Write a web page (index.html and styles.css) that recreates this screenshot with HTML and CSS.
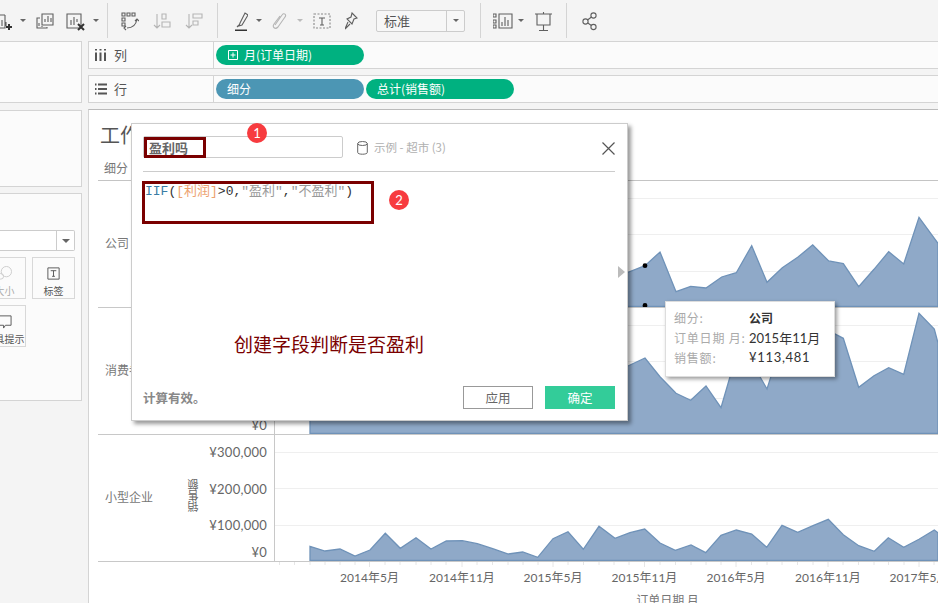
FILE: index.html
```html
<!DOCTYPE html>
<html lang="zh-CN">
<head>
<meta charset="utf-8">
<title>计算字段</title>
<link rel="stylesheet" href="styles.css">
</head>
<body>
<div class="app">
  <header class="toolbar">
    <svg class="ic w12" viewBox="0 0 12 20"><path d="M0 4h5M5 4v13H0M2 15V9M6 15V11" fill="none"/><path class="heavy" d="M6 16h6M9 13v6"/></svg>
    <i class="caret g8"></i>
    <svg class="ic w18 g10" viewBox="0 0 18 20"><path d="M6 3h11v11H6zM9 11V8M12 11V5M15 11V7M4 7H1v10h10v-1M3 15v-3M6 16v-1"/></svg>
    <svg class="ic w20 g12" viewBox="0 0 20 20"><path d="M1 3h14v14H1zM5 14V9M8 14V6M11 11V8"/><path class="heavy" d="M12 13l6 6M18 13l-6 6"/></svg>
    <i class="caret g7"></i>
    <i class="sep g8"></i>
    <svg class="ic w18 g13" viewBox="0 0 18 20"><path d="M1 2h3v3H1zM6 2h3v3H6zM11 2h3v3h-3zM1 7h3v3H1zM1 12h3v3H1zM6 17c5 0 9-3 10-9M14 10l2-2 2 2M5 15l-2 2 2 2"/></svg>
    <svg class="ic w18 g14 dim" viewBox="0 0 18 20"><path d="M4 3v14M1 14l3 3 3-3M9 3h4v5H9zM9 11h8v5H9z"/></svg>
    <svg class="ic w18 g14 dim" viewBox="0 0 18 20"><path d="M4 3v14M1 14l3 3 3-3M8 3h9v4H8zM8 10h5v4H8z"/></svg>
    <i class="sep g14"></i>
    <svg class="ic w13 g17" viewBox="0 0 13 20"><path d="M5 12l5-10 3 2-6 10-3 1zM4 14l-2 2"/><path class="heavy" d="M0 19.500h12"/></svg>
    <i class="caret g8"></i>
    <svg class="ic w15 g10 dim" viewBox="0 0 15 20"><path d="M3 14l7-10c2-3 5 0 3 2l-7 10c-3 3-6 0-4-3l6-8"/></svg>
    <i class="caret g10 dim-caret"></i>
    <svg class="ic w18 g10" viewBox="0 0 18 20"><path class="dash" d="M1 3h16v14H1z"/><path d="M6 7h6M9 7v7M7 14h4"/></svg>
    <svg class="ic w13 g14" viewBox="0 0 13 20"><path d="M7 2l5 5-3 1-2 5-5-5 4-2zM3 11l-3 7 5-5"/></svg>
    <div class="combo g18"><span class="combo-text">标准</span><span class="combo-btn"><i class="caret"></i></span></div>
    <i class="sep g15"></i>
    <svg class="ic w20 g12" viewBox="0 0 20 20"><path d="M0 3h3v3H0zM0 9h3v3H0zM0 14h3v3H0zM6 3h13v14H6zM9 15v-4M12 15V6M15 15V9"/></svg>
    <i class="caret g5"></i>
    <svg class="ic w17 g11" viewBox="0 0 17 20"><path d="M0 3h17M2 3v11h13V3M8.500 14v5M4 19.500h9M8.500 1v2"/></svg>
    <i class="sep g14"></i>
    <svg class="ic w15 g15" viewBox="0 0 15 20"><circle cx="11.500" cy="4.500" r="2.600"/><circle cx="3.500" cy="10.500" r="2.600"/><circle cx="11.500" cy="16" r="2.600"/><path d="M9.500 6l-4 3M5.800 12l3.600 2.500"/></svg>
  </header>

  <div class="workspace">
    <aside class="side">
      <div class="panel panel-a"></div>
      <div class="panel panel-b"></div>
      <div class="panel panel-c">
        <div class="mark-select"><span class="mark-btn"><i class="caret"></i></span></div>
        <div class="mark-grid">
          <div class="mark"><svg class="mark-ic" viewBox="0 0 16 16"><circle cx="10" cy="6" r="5.500"/><circle cx="4" cy="11" r="3"/></svg><span class="faint">大小</span></div>
          <div class="mark"><svg class="mark-ic" viewBox="0 0 16 16"><path d="M2 2h12v12H2zM5 5h6M8 5v6M6.500 11h3"/></svg><span>标签</span></div>
          <div class="mark"><svg class="mark-ic" viewBox="0 0 16 16"><path d="M1 2h14v10H9l-2 3v-3H1z"/></svg><span>工具提示</span></div>
        </div>
      </div>
    </aside>

    <main class="main">
      <div class="shelf">
        <div class="shelf-label"><svg class="shelf-ic" viewBox="0 0 12 12"><path d="M1 0v1.500M1 3.500V12M5.500 0v1.500M5.500 3.500V12M10 0v1.500M10 3.500V12"/></svg>列</div>
        <div class="shelf-body">
          <span class="pill green pill-date"><svg class="plus" viewBox="0 0 10 10"><path d="M.5.500h9v9h-9zM5 2.500v5M2.500 5h5"/></svg>月(订单日期)</span>
        </div>
      </div>
      <div class="shelf">
        <div class="shelf-label"><svg class="shelf-ic" viewBox="0 0 12 12"><path d="M0 1.500h1.500M3 1.500h9M0 6h1.500M3 6h9M0 10.500h1.500M3 10.500h9"/></svg>行</div>
        <div class="shelf-body">
          <span class="pill blue">细分</span>
          <span class="pill green">总计(销售额)</span>
        </div>
      </div>

      <section class="card">
        <h1 class="title">工作表 1</h1>
        <div class="col-head">细分</div>

        <div class="row">
          <div class="row-head">
            <span class="row-label">公司</span>
            <div class="ticks"><span class="tick">¥300,000</span><span class="tick">¥200,000</span><span class="tick">¥100,000</span><span class="tick tick-zero">¥0</span></div>
          </div>
          <svg class="plot" viewBox="275 181 663 126">
            <path class="grid" d="M275 198.500H938M275 234.500H938M275 271.500H938"/>
            <path class="area" d="M310 306.500V280L340 270 400 285 460 262 520 278 580 268 628 272.300 645 265.700 660 252 676 291.700 690.700 286.300 706 288 721.700 277 736.300 272.700 751.700 245.700 767 282.300 782.300 267.700 797.700 257.300 812.700 245 828.700 261 843.300 263.700 858.700 286.700 874 269.300 888.700 251.700 903.700 264 919 217.300 938 243.300V306.500Z"/>
            <circle class="dot" cx="645" cy="265.700" r="2.400"/>
            <circle class="dot" cx="645" cy="305.500" r="2.400"/>
          </svg>
        </div>

        <div class="row">
          <div class="row-head">
            <span class="row-label">消费者</span>
            <div class="ticks"><span class="tick">¥300,000</span><span class="tick">¥200,000</span><span class="tick">¥100,000</span><span class="tick tick-zero">¥0</span></div>
          </div>
          <svg class="plot" viewBox="275 308 663 126">
            <path class="grid" d="M275 325.500H938M275 361.500H938M275 398.500H938"/>
            <path class="area" d="M310 433.500V380L400 395 500 370 600 385 628 366 645 358 660 376.700 676 393.300 690.700 400.300 706 386 721 407.700 730 376.700 745 350 760 376.700 767 389 773 370 790 345 815 335 833 333 843.300 338.300 858.700 387.300 874 375.700 888.700 367.700 903.700 374.300 919 313.300 934.300 329 938 343V433.500Z"/>
          </svg>
        </div>

        <div class="row">
          <div class="row-head">
            <span class="row-label">小型企业</span>
            <span class="axis-title">销售额</span>
            <div class="ticks"><span class="tick">¥300,000</span><span class="tick">¥200,000</span><span class="tick">¥100,000</span><span class="tick tick-zero">¥0</span></div>
          </div>
          <svg class="plot" viewBox="275 435 663 126">
            <path class="grid" d="M275 452.500H938M275 488.500H938M275 525.500H938"/>
            <path class="area" d="M310 560.500V546.300L325 551 340 549 355 556 370 550 385.300 533.300 400.300 548.300 416 537.700 431 549 446.300 541 462.300 540.700 477.300 543.700 492.700 548.700 508.300 554 522.700 552 537.700 557.300 553 538.700 568 531.700 583.300 549.300 599 526.300 615 538.300 630 532.700 644.700 529 660 543 675.300 550.300 691 545 705.700 552.700 721 535.300 736.300 530 751.700 534 766.700 547.300 782 525.300 797.700 532.300 813 525.700 828.300 519.300 843.300 534.700 858.700 545.700 874.300 551.300 888.300 537.700 903.700 547.300 919 539.300 934.300 530 938 532.700V560.500Z"/>
          </svg>
        </div>

        <svg class="x-axis" viewBox="98 562 840 41">
          <path class="x-ticks" d="M279.500 562v3M294.500 562v3M310 562v3M325 562v3M340 562v3M355 562v3M369.500 562v5M385 562v3M400 562v3M416 562v3M431 562v3M446 562v3M462 562v5M477 562v3M492.500 562v3M508 562v3M523 562v3M538 562v3M553 562v5M568 562v3M583.500 562v3M599 562v3M614 562v3M629 562v3M644.500 562v5M660 562v3M675.500 562v3M691 562v3M706 562v3M721 562v3M736 562v5M751.500 562v3M767 562v3M782 562v3M797.500 562v3M813 562v3M828 562v5M843 562v3M858.500 562v3M874 562v3M888.500 562v3M904 562v3M919 562v5M934 562v3"/>
          <text class="x-label" x="369.500" y="582">2014年5月</text>
          <text class="x-label" x="462" y="582">2014年11月</text>
          <text class="x-label" x="553" y="582">2015年5月</text>
          <text class="x-label" x="644.500" y="582">2015年11月</text>
          <text class="x-label" x="736" y="582">2016年5月</text>
          <text class="x-label" x="828" y="582">2016年11月</text>
          <text class="x-label" x="919" y="582">2017年5月</text>
          <text class="x-title" x="667.500" y="605">订单日期 月</text>
        </svg>
      </section>
    </main>
  </div>

  <div class="tooltip">
    <span class="tip-key">细分:</span><strong class="tip-val">公司</strong>
    <span class="tip-key">订单日期 月:</span><span class="tip-val">2015年11月</span>
    <span class="tip-key">销售额:</span><span class="tip-val tip-money">¥113,481</span>
  </div>

  <div class="dialog">
    <div class="dlg-head">
      <div class="name-field">盈利吗</div>
      <svg class="db-ic" viewBox="0 0 11 14"><ellipse cx="5.500" cy="2.500" rx="4.800" ry="2"/><path d="M.7 2.500v9c0 2.300 9.600 2.300 9.600 0v-9"/></svg>
      <span class="source">示例 - 超市 (3)</span>
      <svg class="close" viewBox="0 0 13 13"><path d="M.5.500l12 12M12.500.500l-12 12"/></svg>
    </div>
    <div class="editor"><span class="c-fn">IIF</span>(<span class="c-field">[利润]</span>&gt;0,<span class="c-str">"盈利"</span>,<span class="c-str">"不盈利"</span>)</div>
    <div class="dlg-foot">
      <span class="status">计算有效。</span>
      <button class="btn btn-apply">应用</button>
      <button class="btn btn-ok">确定</button>
    </div>
    <i class="expander"></i>
    <div class="mark-box name-box"></div>
    <div class="mark-box code-box"></div>
    <span class="badge badge-1">1</span>
    <span class="badge badge-2">2</span>
    <p class="note">创建字段判断是否盈利</p>
  </div>
</div>
</body>
</html>
```
FILE: styles.css
```css
* { box-sizing: border-box; }
html, body { margin: 0; padding: 0; }
body { font-family: "Noto Sans CJK SC", "Liberation Sans", sans-serif; color: #555; }
i { display: block; font-style: normal; }

.app { position: relative; width: 938px; height: 603px; overflow: hidden; background: #f4f4f4; display: flex; flex-direction: column; }

/* toolbar */
.toolbar { height: 41px; flex: none; display: flex; align-items: center; }
.ic { flex: none; height: 20px; fill: none; stroke: #5f5f5f; stroke-width: 1.1; }
.ic.dim { stroke: #b5b5b5; }
.heavy { stroke: #333; stroke-width: 2; }
.dash { stroke-dasharray: 2 1.500; stroke: #888; }
.w12 { width: 12px; } .w13 { width: 13px; } .w15 { width: 15px; } .w17 { width: 17px; } .w18 { width: 18px; } .w20 { width: 20px; }
.g5 { margin-left: 5px; } .g7 { margin-left: 7px; } .g8 { margin-left: 8px; } .g10 { margin-left: 10px; } .g11 { margin-left: 11px; }
.g12 { margin-left: 12px; } .g13 { margin-left: 13px; } .g14 { margin-left: 14px; } .g15 { margin-left: 15px; } .g17 { margin-left: 17px; } .g18 { margin-left: 18px; }
.caret { flex: none; width: 0; height: 0; border-left: 3px solid transparent; border-right: 3px solid transparent; border-top: 3px solid #666; }
.dim-caret { border-top-color: #bbb; }
.sep { flex: none; width: 1px; height: 35px; background: #d4d4d4; }
.combo { flex: none; width: 89px; height: 22px; background: #f7f7f7; border: 1px solid #ccc; border-radius: 2px; display: flex; align-items: center; font-size: 13px; }
.combo-text { flex: 1; padding-left: 7px; color: #555; line-height: 20px; }
.combo-btn { width: 18px; height: 20px; border-left: 1px solid #ccc; display: flex; align-items: center; justify-content: center; }

/* workspace */
.workspace { flex: 1; display: flex; gap: 6px; min-height: 0; }
.side { width: 82px; flex: none; display: flex; flex-direction: column; gap: 7px; }
.panel { background: #fbfbfb; border: 1px solid #d4d4d4; border-left: 0; flex: none; }
.panel-a { height: 62px; }
.panel-b { height: 77px; }
.panel-c { height: 208px; margin-top: -1px; padding: 36px 6px 0 0; }
.mark-select { height: 21px; background: #fff; border: 1px solid #ccc; border-left: 0; border-radius: 0 2px 2px 0; display: flex; justify-content: flex-end; }
.mark-btn { width: 18px; border-left: 1px solid #ccc; display: flex; align-items: center; justify-content: center; }
.mark-btn .caret { border-left-width: 4px; border-right-width: 4px; border-top-width: 4px; }
.mark-grid { margin-top: 6px; width: 75px; margin-left: auto; display: grid; grid-template-columns: 43px 43px; column-gap: 6px; row-gap: 6px; justify-content: end; }
.mark { height: 42px; width: 43px; border: 1px solid #d8d8d8; background: #fbfbfb; display: flex; flex-direction: column; align-items: center; font-size: 10px; line-height: 14px; white-space: nowrap; color: #555; overflow: hidden; }
.mark-ic { width: 15px; height: 15px; margin: 8px 0 3px; fill: none; stroke: #555; flex: none; }
.mark:nth-child(1) .mark-ic { stroke: #ccc; }
.faint { color: #aaa; }

/* shelves */
.main { flex: 1; min-width: 0; display: flex; flex-direction: column; }
.shelf { height: 28px; flex: none; margin-bottom: 6px; background: #fbfbfb; border-top: 1px solid #d4d4d4; border-bottom: 1px solid #d4d4d4; border-left: 1px solid #d4d4d4; display: flex; }
.shelf-label { width: 125px; flex: none; border-right: 1px solid #d4d4d4; display: flex; align-items: center; padding: 0 0 1px 6px; gap: 7px; font-size: 13px; color: #555; }
.shelf-ic { width: 12px; height: 12px; fill: none; stroke: #555; stroke-width: 2; }
.shelf-body { display: flex; gap: 2px; padding-left: 2px; align-items: center; }
.pill { width: 148px; height: 20px; border-radius: 10px; color: #fff; font-size: 12px; line-height: 20px; padding-left: 11px; display: flex; align-items: center; }
.green { background: #00b180; }
.blue { background: #4c96b4; }
.pill-date { padding-left: 12px; gap: 6px; }
.plus { width: 10px; height: 10px; fill: none; stroke: #fff; }

/* card */
.card { flex: 1; min-height: 0; background: #fff; border-top: 1px solid #bbb; border-left: 1px solid #d4d4d4; padding-left: 9px; display: flex; flex-direction: column; overflow: hidden; }
.title { margin: 0; height: 47px; padding: 11px 0 0 2px; font-size: 20px; line-height: 28px; font-weight: 400; color: #555; flex: none; }
.col-head { height: 24px; flex: none; border-bottom: 1px solid #c4c4c4; font-size: 12px; line-height: 22px; padding-left: 6px; color: #777; }
.row { height: 127px; flex: none; display: flex; border-bottom: 1px solid #c8c8c8; }
.row-head { position: relative; width: 176px; flex: none; display: flex; justify-content: flex-end; padding-right: 7px; }
.row-label { position: absolute; left: 7px; top: 54px; font-size: 12px; line-height: 16px; color: #777; }
.axis-title { position: absolute; left: 89px; top: 44px; writing-mode: vertical-rl; transform: rotate(180deg); font-size: 11px; line-height: 13px; color: #666; }
.ticks { display: flex; flex-direction: column; align-items: flex-end; padding-top: 10px; font-family: Lato, "Noto Sans CJK SC", sans-serif; font-size: 13px; letter-spacing: .25px; color: #666; }
.tick { flex: none; height: 36.700px; line-height: 14px; }
.tick-zero { margin-top: -10px; }
.plot { width: 663px; height: 126px; flex: none; border-left: 1px solid #c8c8c8; display: block; box-sizing: content-box; }
.grid { stroke: #efefef; fill: none; }
.area { fill: #8fa9c8; stroke: #6f92b8; stroke-width: 1.300; }
.dot { fill: #000; }
.x-axis { width: 840px; height: 41px; flex: none; display: block; }
.x-ticks { stroke: #e6e6e6; fill: none; }
.x-label { font-family: Lato, "Noto Sans CJK SC", sans-serif; font-size: 12px; fill: #666; text-anchor: middle; }
.x-title { font-size: 12px; fill: #777; text-anchor: middle; }

/* tooltip */
.tooltip { position: absolute; left: 665px; top: 301px; width: 170px; height: 76px; background: #fff; border: 1px solid #ddd; box-shadow: 2px 2px 4px rgba(0,0,0,.4); padding: 5px 0 0 8px; display: grid; grid-template-columns: 75px 1fr; grid-auto-rows: 20px; align-items: center; font-size: 12px; white-space: nowrap; }
.tip-key { color: #aaa; letter-spacing: .8px; }
.tip-val { color: #333; font-family: Lato, "Noto Sans CJK SC", sans-serif; font-size: 13px; font-weight: 400; }
strong.tip-val { font-family: "Noto Sans CJK SC", sans-serif; font-size: 12px; font-weight: 700; }
.tip-money { letter-spacing: .7px; }

/* dialog */
.dialog { position: absolute; left: 131px; top: 123px; width: 497px; height: 298px; background: #fff; border: 1px solid #ccc; box-shadow: 3px 3px 4px rgba(0,0,0,.4); padding: 12px 12px 11px 11px; display: flex; flex-direction: column; }
.dlg-head { height: 36px; flex: none; border-bottom: 1px solid #ccc; display: flex; align-items: flex-start; }
.name-field { width: 200px; height: 22px; border: 1px solid #ccc; border-radius: 2px; padding-left: 5px; font-size: 13px; line-height: 22px; font-weight: 700; color: #666; }
.db-ic { width: 11px; height: 14px; margin: 5px 0 0 14px; fill: none; stroke: #666; flex: none; }
.source { margin: 3px 0 0 6px; font-size: 11.500px; line-height: 16px; color: #b0b0b0; flex: 1; }
.close { width: 13px; height: 13px; margin-top: 6px; fill: none; stroke: #555; stroke-width: 1.200; flex: none; }
.editor { flex: 1; padding: 11px 0 0 2px; font-family: "Liberation Mono", "Noto Sans CJK SC", monospace; font-size: 13px; line-height: 18px; color: #333; white-space: pre; }
.c-fn { color: #3a7ca5; }
.c-field { color: #eda26f; }
.c-str { color: #999; }
.dlg-foot { height: 23px; flex: none; display: flex; align-items: flex-start; gap: 12px; }
.status { flex: 1; font-size: 12.500px; font-weight: 700; color: #888; line-height: 23px; }
.btn { width: 70px; height: 23px; padding: 0; font-family: inherit; font-size: 12.500px; line-height: 21px; border-radius: 0; }
.btn-apply { background: #fff; border: 1px solid #999; color: #666; }
.btn-ok { background: #33cc99; border: 0; color: #fff; }
.expander { position: absolute; left: 486px; top: 142px; width: 0; height: 0; border-top: 6px solid transparent; border-bottom: 6px solid transparent; border-left: 7px solid #bbb; }
.mark-box { position: absolute; border: 3px solid #7a0000; }
.name-box { left: 12px; top: 13px; width: 62px; height: 21px; }
.code-box { left: 10px; top: 57px; width: 232px; height: 43px; }
.badge { position: absolute; width: 20px; height: 20px; border-radius: 50%; background: #f73b3f; color: #fff; font-family: Lato, sans-serif; font-size: 13px; line-height: 20px; text-align: center; }
.badge-1 { left: 115px; top: -1px; }
.badge-2 { left: 257px; top: 66px; }
.note { position: absolute; left: 102px; top: 206px; margin: 0; font-size: 19px; line-height: 28px; color: #7a0000; white-space: nowrap; font-weight: 400; }
```
